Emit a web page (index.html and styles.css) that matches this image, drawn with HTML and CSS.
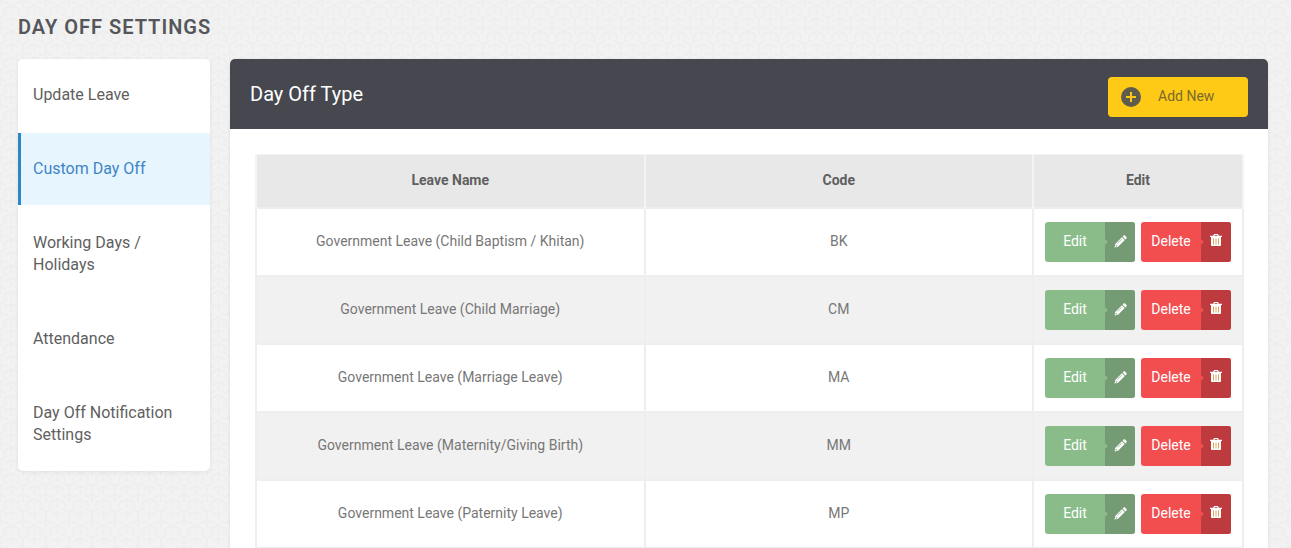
FILE: index.html
```html
<!DOCTYPE html>
<html lang="en">
<head>
<meta charset="utf-8">
<title>Day Off Settings</title>
<link rel="stylesheet" href="styles.css">
</head>
<body>
<svg class="sprite" aria-hidden="true">
  <symbol id="pencil" viewBox="0 0 14 14"><path fill="currentColor" fill-rule="evenodd" d="M9.2 1.7 10.3.6c.5-.5 1.1-.5 1.6 0l1.500 1.500c.5.5.5 1.100 0 1.600l-1.100 1.100zM8.500 2.400l3.100 3.100-7.200 7.200L.6 13.500 1.300 9.600zM8.100 4.200 3.500 8.800l.4.4L8.500 4.600zM2 10.600l-.3 1.200.6.6 1.200-.3-.1-.7-.7-.1z"/></symbol>
  <symbol id="trash" viewBox="0 0 12 13"><path fill="#fff" fill-rule="evenodd" d="M4 0h4l.8 1.700H12v1.400H0V1.700h3.200zM4.700 1l-.3.7h3.200l-.3-.7zM1 3h10v7.700c0 .8-.4 1.300-1.100 1.300H2.100C1.400 12 1 11.500 1 10.700z"/><path stroke="#e0a458" d="M3.500 4.500v6M6 4.500v6M8.500 4.500v6"/></symbol>
</svg>
<main class="page">
  <h1 class="page-title">Day Off Settings</h1>
  <div class="layout">
    <nav class="sidebar" aria-label="Settings">
      <a class="nav-link" href="#leave">Update Leave</a>
      <a class="nav-link active" href="#custom" aria-current="page">Custom Day Off</a>
      <a class="nav-link" href="#working">Working Days / Holidays</a>
      <a class="nav-link" href="#attendance">Attendance</a>
      <a class="nav-link" href="#notifications">Day Off Notification Settings</a>
    </nav>
    <section class="panel">
      <header class="panel-header">
        <h2 class="panel-title">Day Off Type</h2>
        <button class="add-button" type="button">
          <svg class="add-icon" viewBox="0 0 20 20" aria-hidden="true"><circle cx="10" cy="10" r="10" fill="#5f5c4d"/><path d="M10 5v10M5 10h10" stroke="#ffca16" stroke-width="2"/></svg>
          <span class="add-label">Add New</span>
        </button>
      </header>
      <div class="panel-body">
        <table class="leave-table">
          <thead><tr><th scope="col">Leave Name</th><th scope="col">Code</th><th scope="col" class="edit-column">Edit</th></tr></thead>
          <tbody>
            <tr><td>Government Leave (Child Baptism / Khitan)</td><td>BK</td><td><div class="actions"><button class="action edit" type="button"><span class="label">Edit</span><span class="icon"><svg class="pencil"><use href="#pencil"/></svg></span></button><button class="action delete" type="button"><span class="label">Delete</span><span class="icon"><svg class="trash"><use href="#trash"/></svg></span></button></div></td></tr>
            <tr><td>Government Leave (Child Marriage)</td><td>CM</td><td><div class="actions"><button class="action edit" type="button"><span class="label">Edit</span><span class="icon"><svg class="pencil"><use href="#pencil"/></svg></span></button><button class="action delete" type="button"><span class="label">Delete</span><span class="icon"><svg class="trash"><use href="#trash"/></svg></span></button></div></td></tr>
            <tr><td>Government Leave (Marriage Leave)</td><td>MA</td><td><div class="actions"><button class="action edit" type="button"><span class="label">Edit</span><span class="icon"><svg class="pencil"><use href="#pencil"/></svg></span></button><button class="action delete" type="button"><span class="label">Delete</span><span class="icon"><svg class="trash"><use href="#trash"/></svg></span></button></div></td></tr>
            <tr><td>Government Leave (Maternity/Giving Birth)</td><td>MM</td><td><div class="actions"><button class="action edit" type="button"><span class="label">Edit</span><span class="icon"><svg class="pencil"><use href="#pencil"/></svg></span></button><button class="action delete" type="button"><span class="label">Delete</span><span class="icon"><svg class="trash"><use href="#trash"/></svg></span></button></div></td></tr>
            <tr><td>Government Leave (Paternity Leave)</td><td>MP</td><td><div class="actions"><button class="action edit" type="button"><span class="label">Edit</span><span class="icon"><svg class="pencil"><use href="#pencil"/></svg></span></button><button class="action delete" type="button"><span class="label">Delete</span><span class="icon"><svg class="trash"><use href="#trash"/></svg></span></button></div></td></tr>
          </tbody>
        </table>
      </div>
    </section>
  </div>
</main>
</body>
</html>
```
FILE: styles.css
```css
* { box-sizing: border-box; }

body {
  margin: 0;
  color: #5f5f5f;
  font-family: Roboto, "Liberation Sans", sans-serif;
  font-size: 14px;
  background: #f2f2f2 url("data:image/svg+xml,%3Csvg xmlns='http://www.w3.org/2000/svg' width='23' height='26' viewBox='0 0 23 26'%3E%3Cg fill='none' stroke='%23eeeeee' stroke-width='2'%3E%3Cpath d='M0 0v8M23 0v8M0 0l5 3 3-2M23 0l-5 3-3-2M11.500 6v8M4 9l7.500-4 7.500 4M4 9v4M19 9v4M0 18l7-4M23 18l-7-4M0 18v8M23 18v8M5 21l6.500-3 6.500 3M11.500 18v8'/%3E%3C/g%3E%3C/svg%3E");
}

button { border: 0; padding: 0; color: inherit; font: inherit; cursor: pointer; }
.sprite { display: none; }
.page { padding: 15px 23px 0 18px; overflow: hidden; }

.page-title {
  margin: 0 0 20px;
  color: #54565a;
  font-size: 20px;
  font-weight: 600;
  line-height: 24px;
  letter-spacing: 1px;
  text-transform: uppercase;
}

.layout { display: flex; align-items: flex-start; gap: 20px; }

.sidebar {
  flex: 0 0 192px;
  display: flex;
  flex-direction: column;
  gap: 2px;
  overflow: hidden;
  background: #fff;
  border-radius: 5px;
  box-shadow: 0 1px 4px #00000012;
}

.nav-link {
  padding: 25px 15px 25px 12px;
  border-left: 3px solid transparent;
  color: #5f5f5f;
  font-size: 16px;
  line-height: 22px;
  text-decoration: none;
}

.nav-link.active { border-color: #2b87c8; background: #e7f5ff; color: #3f85c6; }

.panel {
  flex: 1;
  min-width: 0;
  background: #fff;
  border-radius: 5px;
  box-shadow: 0 1px 4px #00000012;
}

.panel-header {
  display: flex;
  align-items: center;
  justify-content: space-between;
  padding: 18px 20px 12px;
  border-radius: 5px 5px 0 0;
  background: #46474f;
}

.panel-title { margin: 0; padding-bottom: 6px; color: #fff; font-size: 20px; font-weight: 400; line-height: 24px; }

.add-button {
  display: flex;
  align-items: center;
  width: 140px;
  height: 40px;
  padding: 0 13px;
  gap: 17px;
  border-radius: 4px;
  background: #ffca16;
  color: #7a692d;
}

.add-icon { width: 20px; height: 20px; }
.add-label { padding-bottom: 2px; }
.panel-body { padding: 25px 24px 25px 25px; }
.leave-table { width: 100%; table-layout: fixed; border-collapse: collapse; text-align: center; }
.edit-column { width: 210px; }

th {
  height: 53px;
  padding: 0 0 2px;
  border: 2px solid #f4f4f4;
  border-width: 1px 2px 0;
  background: #e8e8e8;
  font-weight: 700;
}

td { height: 68px; padding: 0 10px 2px; border: 2px solid #eceef0; color: #777; }
tbody tr:nth-child(even) { background: #f1f1f1; }

.actions { display: flex; justify-content: center; gap: 6px; padding-top: 2px; }
.action { display: flex; overflow: hidden; width: 90px; height: 40px; border-radius: 3px; color: #fff; }
.edit { background: #8abc8a; }
.delete { background: #f24e50; }
.label { flex: 1; line-height: 38px; }

.icon { position: relative; display: grid; place-items: center; width: 30px; height: 40px; background: #759b74; }
.delete .icon { background: #bd3b3e; }

/* Small pointer from the label into the icon tile */
.icon::before {
  content: "";
  position: absolute;
  left: 0;
  top: 17px;
  border: 3px solid transparent;
  border-right: 0;
  border-left-color: #8abc8a;
}

.delete .icon::before { border-left-color: #f24e50; }
.pencil { width: 13px; height: 13px; }
.trash { width: 12px; height: 13px; margin-bottom: 2px; }
```
